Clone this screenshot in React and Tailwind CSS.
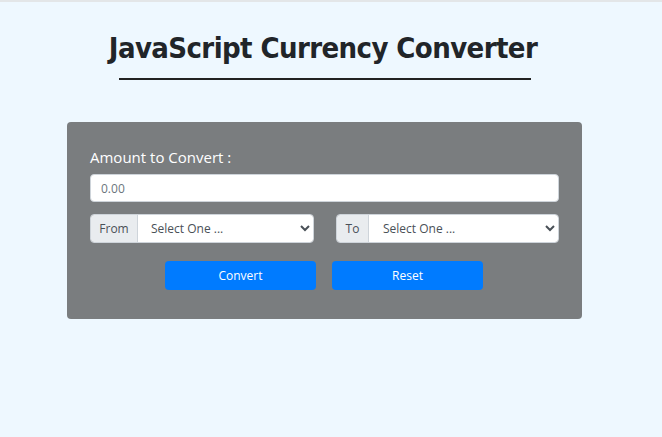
import React, { useState } from 'react';

const currencies = ['USD', 'EUR', 'GBP', 'JPY', 'INR', 'CAD', 'AUD'];

export default function App() {
  const [amount, setAmount] = useState('');
  const [from, setFrom] = useState('');
  const [to, setTo] = useState('');

  const reset = () => {
    setAmount('');
    setFrom('');
    setTo('');
  };

  return (
    <div className="min-h-[437px] w-full bg-[#eef8ff] border-t-2 border-[#e3e6e8] font-['Open_Sans',sans-serif]">
      {/* Heading */}
      <div className="flex flex-col items-center pt-[26px]">
        <h1 className="mr-[16px] text-[29px] leading-[40px] font-semibold text-[#212529] tracking-[-0.6px] font-['DejaVu_Sans_Condensed','Noto_Sans',sans-serif]">
          JavaScript Currency Converter
        </h1>
        <div className="w-[412px] h-[2px] bg-[#222] mt-[10px] ml-[-13px]" />
      </div>

      {/* Card */}
      <div className="mt-[42px] ml-[67px] w-[515px] h-[197px] bg-[#7a7d7f] rounded-[4px] px-[23px] pt-[25px]">
        <label className="block text-white text-[15px] leading-[20px] mb-[7px]">Amount to Convert :</label>
        <input
          value={amount}
          onChange={(e) => setAmount(e.target.value)}
          placeholder="0.00"
          className="w-full h-[28px] rounded-[4px] bg-white px-[10px] text-[12px] text-[#495057] placeholder:text-[#6c757d] outline-none border border-[#ced4da]"
        />

        <div className="flex justify-between mt-[12px]">
          <div className="flex w-[224px] h-[29px] rounded-[4px] overflow-hidden border border-[#ced4da]">
            <span className="w-[47px] bg-[#e9ecef] text-[#495057] text-[12px] flex items-center justify-center border-r border-[#ced4da]">From</span>
            <select
              value={from}
              onChange={(e) => setFrom(e.target.value)}
              className="flex-1 bg-white text-[12px] text-[#495057] pl-[9px] pr-[4px] outline-none"
            >
              <option value="">Select One ...</option>
              {currencies.map((c) => <option key={c} value={c}>{c}</option>)}
            </select>
          </div>
          <div className="flex w-[223px] h-[29px] rounded-[4px] overflow-hidden border border-[#ced4da]">
            <span className="w-[32px] bg-[#e9ecef] text-[#495057] text-[12px] flex items-center justify-center border-r border-[#ced4da]">To</span>
            <select
              value={to}
              onChange={(e) => setTo(e.target.value)}
              className="flex-1 bg-white text-[12px] text-[#495057] pl-[10px] pr-[4px] outline-none"
            >
              <option value="">Select One ...</option>
              {currencies.map((c) => <option key={c} value={c}>{c}</option>)}
            </select>
          </div>
        </div>

        <div className="flex justify-center gap-[16px] mt-[18px] mr-[1px]">
          <button className="w-[151px] h-[29px] rounded-[4px] bg-[#007bff] text-white text-[12px]">Convert</button>
          <button onClick={reset} className="w-[151px] h-[29px] rounded-[4px] bg-[#007bff] text-white text-[12px]">Reset</button>
        </div>
      </div>
    </div>
  );
}
